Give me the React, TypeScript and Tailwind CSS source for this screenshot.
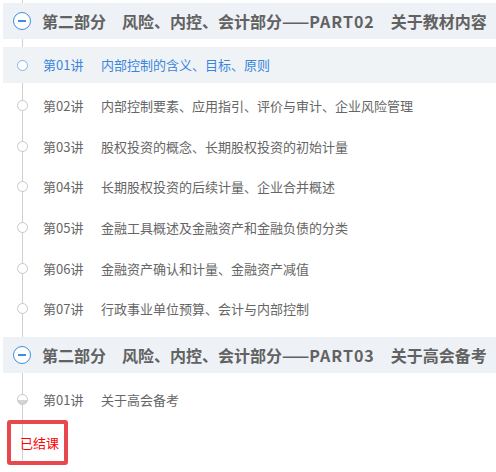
const PART02 = [
  { no: "第01讲", title: "内部控制的含义、目标、原则", active: true },
  { no: "第02讲", title: "内部控制要素、应用指引、评价与审计、企业风险管理" },
  { no: "第03讲", title: "股权投资的概念、长期股权投资的初始计量" },
  { no: "第04讲", title: "长期股权投资的后续计量、企业合并概述" },
  { no: "第05讲", title: "金融工具概述及金融资产和金融负债的分类" },
  { no: "第06讲", title: "金融资产确认和计量、金融资产减值" },
  { no: "第07讲", title: "行政事业单位预算、会计与内部控制" },
];

const font = "font-['Microsoft_YaHei','Noto_Sans_CJK_SC',sans-serif]";

function SectionHeader({ part, topic }: { part: string; topic: string }) {
  return (
    <div className="relative flex h-[36px] items-center whitespace-nowrap bg-[#eef1f5]">
      <span className="ml-[10px] flex h-[18px] w-[18px] shrink-0 items-center justify-center rounded-full border-[1.5px] border-[#3d8fe0] bg-white">
        <span className="h-[1.5px] w-[8px] bg-[#3d8fe0]" />
      </span>
      <span className="ml-[11px] text-[16px] font-bold text-[#626262]">
        第二部分
        <span className="ml-[16px]">
          风险、内控、会计部分——<span className="tracking-[1px]">{part}</span>
        </span>
        <span className="ml-[16px]">{topic}</span>
      </span>
    </div>
  );
}

function Lesson({
  no,
  title,
  active,
  half,
}: {
  no: string;
  title: string;
  active?: boolean;
  half?: boolean;
}) {
  return (
    <div
      className={`relative flex h-[36px] items-center whitespace-nowrap text-[13px] ${
        active ? "bg-[#f0f3f6] text-[#3b86db]" : "text-[#666]"
      }`}
    >
      {half ? (
        <span className="ml-[14px] h-[11px] w-[11px] shrink-0 overflow-hidden rounded-full border border-[#c8c8c8] bg-[linear-gradient(to_bottom,#fff_50%,#d4d4d4_50%)]" />
      ) : (
        <span
          className={`ml-[14px] h-[11px] w-[11px] shrink-0 rounded-full border bg-white ${
            active ? "border-[#7fb3ee]" : "border-[#c8c8c8]"
          }`}
        />
      )}
      <span className="ml-[15px] w-[58px]">{no}</span>
      <span>{title}</span>
    </div>
  );
}

export default function App() {
  return (
    <div className={`relative h-[472px] w-[496px] overflow-hidden bg-white pl-[3px] pt-[3px] ${font}`}>
      {/* 时间线竖线 */}
      <span className="absolute left-[22px] top-0 h-[460px] w-px bg-[#cfcfcf]" />

      <SectionHeader part="PART02" topic="关于教材内容" />
      <div className="mt-[8px] flex flex-col gap-[4.67px]">
        {PART02.map((l) => (
          <Lesson key={l.no} {...l} />
        ))}
      </div>

      <div className="mt-[10px]">
        <SectionHeader part="PART03" topic="关于高会备考" />
      </div>
      <div className="mt-[9px]">
        <Lesson no="第01讲" title="关于高会备考" half />
      </div>

      <div className="relative ml-[4px] mt-[2px] flex h-[45px] w-[61px] items-center rounded-[3px] border-[4px] border-[#e8474b] pl-[9px] text-[13px] text-[#ff0000]">
        已结课
      </div>
    </div>
  );
}
